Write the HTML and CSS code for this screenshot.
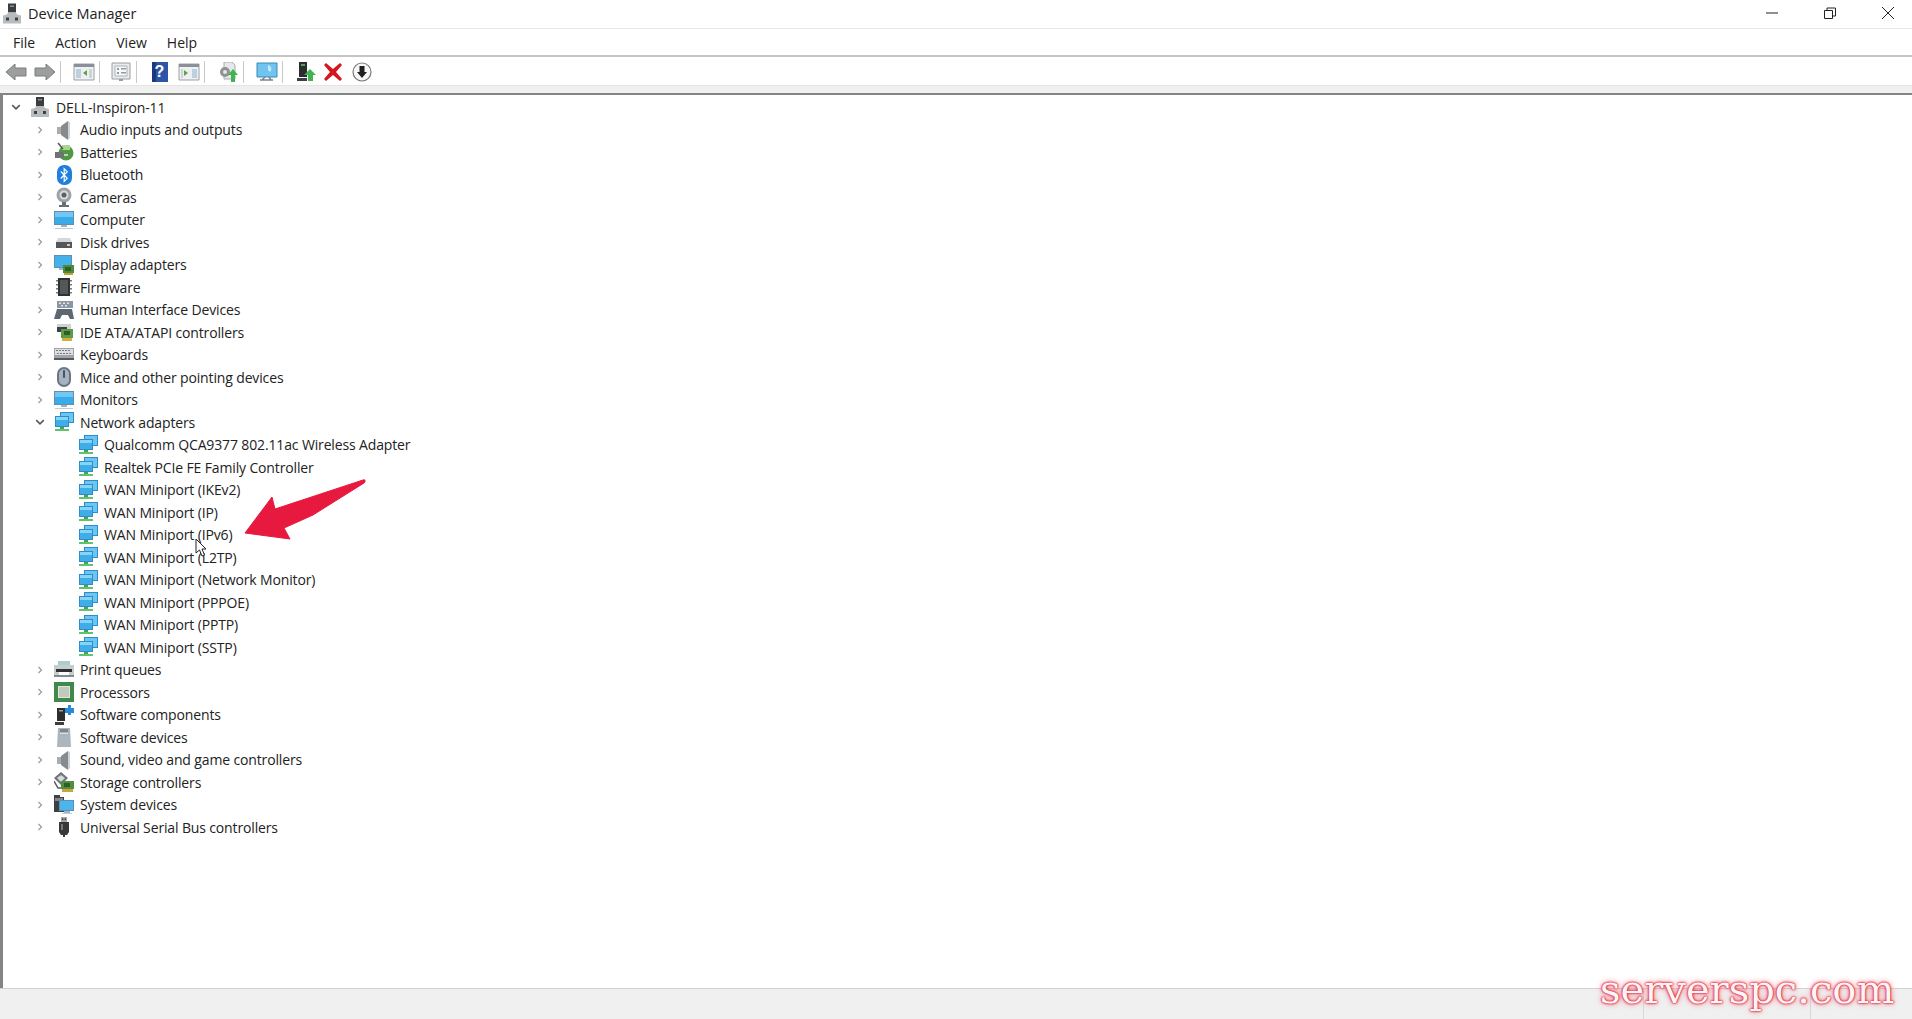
FILE: index.html
```html
<!DOCTYPE html>
<html lang="en">
<head>
  <meta charset="UTF-8">
  <title>Device Manager</title>
  <link rel="stylesheet" href="styles.css">
</head>
<body>
  <svg class="sprite" xmlns="http://www.w3.org/2000/svg">
    <symbol id="chev-r" viewBox="0 0 8 10"><path d="M2.5 2l3 3-3 3" fill="none" stroke="#9a9a9a" stroke-width="1.2"/></symbol>
    <symbol id="chev-d" viewBox="0 0 10 8"><path d="M2 2.5l3 3 3-3" fill="none" stroke="#555" stroke-width="1.2"/></symbol>

    <symbol id="i-host" viewBox="0 0 20 20"><path d="M6 0h8v9H6z" fill="#3a3d40"/><path d="M8 2h4v1.500H8z" fill="#8b8f92"/><path d="M6 9h8l1 2 4 1v8H1v-8l4-1z" fill="#b9bcbf"/><path d="M4 14h3v3H4zM13 14h3v3h-3z" fill="#3f4245"/></symbol>
    <symbol id="i-audio" viewBox="0 0 20 20"><path d="M3 7h4v7H3z" fill="#a9adb0"/><path d="M7 6l7-5v19l-7-5z" fill="#878b8e"/><path d="M14 1l2 1v16l-2 2z" fill="#cfd2d4"/></symbol>
    <symbol id="i-battery" viewBox="0 0 20 20"><circle cx="12" cy="11" r="7.5" fill="#4e9a3c"/><path d="M8 3h8v5H8z" fill="#a7d596"/><path d="M1 10h7l2 1.5V15l-2 1H1z" fill="#6e7276"/><path d="M10 12h4v2h-4z" fill="#c7cacc"/><path d="M4 1l5 6" stroke="#555" stroke-width="1.5"/></symbol>
    <symbol id="i-bt" viewBox="0 0 20 20"><rect x="3" y="0" width="15" height="20" rx="7" fill="#1f7fdc"/><path d="M6.800 6.500l6.400 6.800-3 3V3.700l3 3-6.400 6.800" fill="none" stroke="#fff" stroke-width="1.200"/></symbol>
    <symbol id="i-camera" viewBox="0 0 20 20"><circle cx="10" cy="8" r="7.5" fill="#9ea2a5"/><circle cx="10" cy="8" r="4.5" fill="#d8dadb"/><circle cx="10" cy="8" r="2.5" fill="#5c6064"/><path d="M8 15h4v3h3v2H5v-2h3z" fill="#6a6e72"/></symbol>
    <symbol id="i-monitor" viewBox="0 0 20 20"><rect x="0" y="1" width="20" height="14" fill="#5f8fb3"/><rect x="1" y="2" width="18" height="12" fill="#38abe8"/><path d="M1 2h18v5H1z" fill="#72c7f2"/><path d="M7 15h6v2H7z" fill="#9db4c4"/><path d="M1 18h18v1H1z" fill="#c3ccd2"/></symbol>
    <symbol id="i-disk" viewBox="0 0 20 20"><path d="M4 6h12l2 4H2z" fill="#d5d7d9"/><path d="M2 10h16v6H2z" fill="#55585b"/><path d="M13 12h3v2h-3z" fill="#c9cccf"/></symbol>
    <symbol id="i-display" viewBox="0 0 20 20"><rect x="0" y="0" width="18" height="13" fill="#5f8fb3"/><rect x="1" y="1" width="16" height="11" fill="#45b1ea"/><path d="M5 13h7v2H5z" fill="#9db4c4"/><path d="M9 10h11v8H9z" fill="#4d8a3a"/><path d="M11 12h6v4h-6z" fill="#2f5f28"/><path d="M10 18h9v2h-9z" fill="#c6a13a"/></symbol>
    <symbol id="i-chip" viewBox="0 0 20 20"><path d="M4 1h12v18H4z" fill="#2f3133"/><path d="M6 3h8v14H6z" fill="#55585a"/><path d="M2 3h2v1.500H2zM2 7h2v1.500H2zM2 11h2v1.500H2zM2 15h2v1.500H2zM16 3h2v1.500h-2zM16 7h2v1.500h-2zM16 11h2v1.500h-2zM16 15h2v1.500h-2z" fill="#797c7f"/></symbol>
    <symbol id="i-hid" viewBox="0 0 20 20"><path d="M3 1h16v7H3z" fill="#8d96a3"/><path d="M5 2.500h2v1.500H5zM9 2.500h2v1.500H9zM13 2.500h2v1.500h-2zM7 5h2v1.500H7zM11 5h2v1.500h-2z" fill="#e1e4e8"/><path d="M3 9h15l2 10h-4l-2-4H8l-2 4H0z" fill="#5d6673"/></symbol>
    <symbol id="i-ide" viewBox="0 0 20 20"><path d="M3 2h14v5H3z" fill="#cfd1d3"/><path d="M3 5h10v5H3z" fill="#3f4245"/><path d="M7 7h12v9H7z" fill="#5c9a45"/><path d="M10 9h6v4h-6z" fill="#2f5f28"/><path d="M8 16h10v3H8z" fill="#d4ae3c"/></symbol>
    <symbol id="i-kbd" viewBox="0 0 20 20"><path d="M0 3h20v12H0z" fill="#9fa4a9"/><path d="M1 4h18v6H1z" fill="#dcdee0"/><path d="M2 5h2v1H2zM5 5h2v1H5zM8 5h2v1H8zM11 5h2v1h-2zM14 5h2v1h-2zM3 8h2v1H3zM6 8h2v1H6zM9 8h2v1H9zM12 8h2v1h-2zM15 8h2v1h-2z" fill="#777b80"/><path d="M0 13h20v2H0z" fill="#55595d"/></symbol>
    <symbol id="i-mouse" viewBox="0 0 20 20"><rect x="3" y="0" width="14" height="20" rx="7" fill="#6b7583"/><rect x="5" y="2" width="10" height="16" rx="5" fill="#a8b3c2"/><rect x="9" y="3" width="2" height="8" rx="1" fill="#4a525d"/></symbol>
    <symbol id="i-net" viewBox="0 0 20 20"><rect x="6" y="0" width="14" height="11" fill="#2f8ccc"/><rect x="7" y="1" width="12" height="9" fill="#6cc6f2"/><rect x="1" y="4" width="14" height="11" fill="#2f8ccc"/><rect x="2" y="5" width="12" height="9" fill="#3fadE8"/><path d="M2 5h12v3H2z" fill="#86d4f6"/><path d="M6 15h4v2H6z" fill="#3ea84a"/><path d="M1 17h14v2H1z" fill="#63c26c"/></symbol>
    <symbol id="i-print" viewBox="0 0 20 20"><path d="M4 1h12v5H4z" fill="#a9cfc9"/><path d="M0 5h20v10H0z" fill="#c9ccce"/><path d="M2 9h16v3H2z" fill="#2f3234"/><path d="M5 12h10v4H5z" fill="#fff"/><path d="M0 15h20v2H0z" fill="#85898c"/></symbol>
    <symbol id="i-cpu" viewBox="0 0 20 20"><path d="M0 0h20v20H0z" fill="#3f8a4a"/><path d="M4 4h12v12H4z" fill="#dfe5da"/><path d="M5 5h10v10H5z" fill="#c2c9bd"/></symbol>
    <symbol id="i-swcomp" viewBox="0 0 20 20"><path d="M3 3h8v13H3z" fill="#2b2d2f"/><path d="M5 5h4v1.500H5z" fill="#9a9ea1"/><path d="M1 17h9v3H1z" fill="#3c3f41"/><path d="M11 3h3V0h3v3h3v5h-3v2h-3V8h-3z" fill="#2b87d8"/></symbol>
    <symbol id="i-swdev" viewBox="0 0 20 20"><path d="M4 1h12l1 19H3z" fill="#aeb6bd"/><path d="M6 2h8v3H6z" fill="#7f878e"/><path d="M6 6h8v1H6z" fill="#d8dde0"/></symbol>
    <symbol id="i-storage" viewBox="0 0 20 20"><path d="M7 0l7 6-7 7-7-7z" fill="#70757a"/><path d="M7 3l4 3-4 4-4-4z" fill="#d6d9db"/><path d="M7 9h13v8H7z" fill="#4f8f3e"/><path d="M10 11h6v4h-6z" fill="#2f5f28"/><path d="M8 17h11v3H8z" fill="#cba63a"/><path d="M0 9l4 7h3" fill="none" stroke="#55595c" stroke-width="1.500"/></symbol>
    <symbol id="i-system" viewBox="0 0 20 20"><path d="M0 0h6v2h4v15H0z" fill="#3d4144"/><path d="M1 3h8v3H1z" fill="#84888b"/><rect x="5" y="5" width="15" height="11" fill="#5f8fb3"/><rect x="6" y="6" width="13" height="9" fill="#4bb5ee"/><path d="M10 16h6v2h-6z" fill="#9db4c4"/><path d="M8 18h10v1H8z" fill="#c3ccd2"/></symbol>
    <symbol id="i-usb" viewBox="0 0 20 20"><path d="M7 0h6v5H7z" fill="#a2a5a8"/><path d="M8 1.500h1.500v1.500H8zM10.500 1.500H12v1.500h-1.500z" fill="#444"/><path d="M5 5h10v10l-2 3h-6l-2-3z" fill="#37393b"/><path d="M9 18h2v2H9z" fill="#37393b"/><path d="M7 7h2v6H7z" fill="#77797c"/></symbol>

    <symbol id="t-back" viewBox="0 0 22 18"><path d="M1 9l9-8v4h11v8H10v4z" fill="#9c9f9e" stroke="#7a7d7c"/></symbol>
    <symbol id="t-fwd" viewBox="0 0 22 18"><path d="M21 9l-9-8v4H1v8h11v4z" fill="#9c9f9e" stroke="#7a7d7c"/></symbol>
    <symbol id="t-tree" viewBox="0 0 22 18"><path d="M1 1h20v16H1z" fill="#eef0f1" stroke="#9ca1a5"/><path d="M1 1h20v3H1z" fill="#8a9098"/><path d="M3 6h5v9H3z" fill="#bcd0e0"/><path d="M14 7l-4 3 4 3z" fill="#5aa54c"/><path d="M16 6h3v9h-3z" fill="#cfd4d8"/></symbol>
    <symbol id="t-props" viewBox="0 0 20 20"><path d="M1 1h18v16H1z" fill="#e9ebec" stroke="#9a9ea2"/><path d="M4 4h12v10H4z" fill="#f6f7f8" stroke="#aeb3b7"/><path d="M6 6h2v2H6zM6 10h2v2H6zM10 6h5v1.500h-5zM10 10h5v1.500h-5z" fill="#8d9ba8"/><path d="M8 17h4v2H8z" fill="#9a9ea2"/></symbol>
    <symbol id="t-help" viewBox="0 0 18 20"><path d="M1 0h16v20H1z" fill="#2c55a8"/><path d="M1 0h4v20H1z" fill="#1b3a7e"/></symbol>
    <symbol id="t-view" viewBox="0 0 22 18"><path d="M1 1h20v16H1z" fill="#eef0f1" stroke="#9ca1a5"/><path d="M1 1h20v3H1z" fill="#8a9098"/><path d="M14 6h5v9h-5z" fill="#bcd0e0"/><path d="M6 7l4 3-4 3z" fill="#5aa54c"/><path d="M3 6h2v9H3z" fill="#cfd4d8"/></symbol>
    <symbol id="t-update" viewBox="0 0 20 20"><path d="M6 0h8l3 3v14H6z" fill="#e6e7e8" stroke="#a8abad"/><circle cx="7" cy="10" r="5" fill="#8f9396"/><circle cx="7" cy="10" r="2" fill="#e6e7e8"/><path d="M15 7l5 6h-3v7h-4v-7h-3z" fill="#3fb451"/></symbol>
    <symbol id="t-scan" viewBox="0 0 22 20"><path d="M1 1h20v14H1z" fill="#6fc5f0" stroke="#3f87b5"/><path d="M12 3a4 4 0 0 1 2 7l-2-2z" fill="#c7e9fa"/><path d="M9 15l-3 3M13 15l2 3M4 18h13" stroke="#7d8488" stroke-width="1.500" fill="none"/></symbol>
    <symbol id="t-enable" viewBox="0 0 20 20"><path d="M3 0h8v15H3z" fill="#2b2d2f"/><path d="M5 2h4v2H5z" fill="#50a55a"/><path d="M1 16h10v3H1z" fill="#3c3f41"/><path d="M14 7l6 6h-3v6h-5v-6H8z" fill="#3fb451"/></symbol>
    <symbol id="t-remove" viewBox="0 0 20 20"><path d="M3 1l7 6 7-6 2 2-6 7 6 7-2 2-7-6-7 6-2-2 6-7-6-7z" fill="#d5161f"/></symbol>
    <symbol id="t-down" viewBox="0 0 20 20"><circle cx="10" cy="10" r="9" fill="#f7f7f7" stroke="#77797b" stroke-width="1.200"/><path d="M7.500 4h5v6h2.500l-5 6-5-6h2.500z" fill="#1f1f1f"/></symbol>
  </svg>

  <div class="window">
    <header class="titlebar">
      <svg class="title-icon"><use href="#i-host"/></svg>
      <span class="title-text">Device Manager</span>
      <div class="win-btns">
        <button class="win-btn"><svg viewBox="0 0 14 14"><path d="M1 7h12" stroke="#222" fill="none"/></svg></button>
        <button class="win-btn"><svg viewBox="0 0 14 14"><path d="M1.500 4.500h8v8h-8zM4 4.500V2h8.500v8h-3" stroke="#222" fill="none"/></svg></button>
        <button class="win-btn"><svg viewBox="0 0 14 14"><path d="M1 1l12 12M13 1L1 13" stroke="#222" fill="none"/></svg></button>
      </div>
    </header>

    <nav class="menubar">
      <span>File</span>
      <span>Action</span>
      <span>View</span>
      <span>Help</span>
    </nav>

    <div class="toolbar">
      <button class="tb-btn"><svg><use href="#t-back"/></svg></button>
      <button class="tb-btn"><svg><use href="#t-fwd"/></svg></button>
      <i class="tb-sep"></i>
      <button class="tb-btn"><svg><use href="#t-tree"/></svg></button>
      <i class="tb-sep"></i>
      <button class="tb-btn tb-pull"><svg><use href="#t-props"/></svg></button>
      <i class="tb-sep"></i>
      <button class="tb-btn help-btn"><svg><use href="#t-help"/></svg><span class="help-mark">?</span></button>
      <button class="tb-btn"><svg><use href="#t-view"/></svg></button>
      <i class="tb-sep"></i>
      <button class="tb-btn"><svg><use href="#t-update"/></svg></button>
      <i class="tb-sep"></i>
      <button class="tb-btn"><svg><use href="#t-scan"/></svg></button>
      <i class="tb-sep"></i>
      <button class="tb-btn"><svg><use href="#t-enable"/></svg></button>
      <button class="tb-btn tb-pull"><svg><use href="#t-remove"/></svg></button>
      <button class="tb-btn"><svg><use href="#t-down"/></svg></button>
    </div>
    <div class="toolbar-gap"></div>

    <main class="tree">
      <div class="row"><svg class="chev"><use href="#chev-d"/></svg><svg class="ico"><use href="#i-host"/></svg><span>DELL-Inspiron-11</span></div>
      <div class="branch">
        <div class="row"><svg class="chev"><use href="#chev-r"/></svg><svg class="ico"><use href="#i-audio"/></svg><span>Audio inputs and outputs</span></div>
        <div class="row"><svg class="chev"><use href="#chev-r"/></svg><svg class="ico"><use href="#i-battery"/></svg><span>Batteries</span></div>
        <div class="row"><svg class="chev"><use href="#chev-r"/></svg><svg class="ico"><use href="#i-bt"/></svg><span>Bluetooth</span></div>
        <div class="row"><svg class="chev"><use href="#chev-r"/></svg><svg class="ico"><use href="#i-camera"/></svg><span>Cameras</span></div>
        <div class="row"><svg class="chev"><use href="#chev-r"/></svg><svg class="ico"><use href="#i-monitor"/></svg><span>Computer</span></div>
        <div class="row"><svg class="chev"><use href="#chev-r"/></svg><svg class="ico"><use href="#i-disk"/></svg><span>Disk drives</span></div>
        <div class="row"><svg class="chev"><use href="#chev-r"/></svg><svg class="ico"><use href="#i-display"/></svg><span>Display adapters</span></div>
        <div class="row"><svg class="chev"><use href="#chev-r"/></svg><svg class="ico"><use href="#i-chip"/></svg><span>Firmware</span></div>
        <div class="row"><svg class="chev"><use href="#chev-r"/></svg><svg class="ico"><use href="#i-hid"/></svg><span>Human Interface Devices</span></div>
        <div class="row"><svg class="chev"><use href="#chev-r"/></svg><svg class="ico"><use href="#i-ide"/></svg><span>IDE ATA/ATAPI controllers</span></div>
        <div class="row"><svg class="chev"><use href="#chev-r"/></svg><svg class="ico"><use href="#i-kbd"/></svg><span>Keyboards</span></div>
        <div class="row"><svg class="chev"><use href="#chev-r"/></svg><svg class="ico"><use href="#i-mouse"/></svg><span>Mice and other pointing devices</span></div>
        <div class="row"><svg class="chev"><use href="#chev-r"/></svg><svg class="ico"><use href="#i-monitor"/></svg><span>Monitors</span></div>
        <div class="row"><svg class="chev"><use href="#chev-d"/></svg><svg class="ico"><use href="#i-net"/></svg><span>Network adapters</span></div>
        <div class="branch">
          <div class="row"><i class="chev"></i><svg class="ico"><use href="#i-net"/></svg><span>Qualcomm QCA9377 802.11ac Wireless Adapter</span></div>
          <div class="row"><i class="chev"></i><svg class="ico"><use href="#i-net"/></svg><span>Realtek PCIe FE Family Controller</span></div>
          <div class="row"><i class="chev"></i><svg class="ico"><use href="#i-net"/></svg><span>WAN Miniport (IKEv2)</span></div>
          <div class="row"><i class="chev"></i><svg class="ico"><use href="#i-net"/></svg><span>WAN Miniport (IP)</span></div>
          <div class="row"><i class="chev"></i><svg class="ico"><use href="#i-net"/></svg><span>WAN Miniport (IPv6)</span></div>
          <div class="row"><i class="chev"></i><svg class="ico"><use href="#i-net"/></svg><span>WAN Miniport (L2TP)</span></div>
          <div class="row"><i class="chev"></i><svg class="ico"><use href="#i-net"/></svg><span>WAN Miniport (Network Monitor)</span></div>
          <div class="row"><i class="chev"></i><svg class="ico"><use href="#i-net"/></svg><span>WAN Miniport (PPPOE)</span></div>
          <div class="row"><i class="chev"></i><svg class="ico"><use href="#i-net"/></svg><span>WAN Miniport (PPTP)</span></div>
          <div class="row"><i class="chev"></i><svg class="ico"><use href="#i-net"/></svg><span>WAN Miniport (SSTP)</span></div>
        </div>
        <div class="row"><svg class="chev"><use href="#chev-r"/></svg><svg class="ico"><use href="#i-print"/></svg><span>Print queues</span></div>
        <div class="row"><svg class="chev"><use href="#chev-r"/></svg><svg class="ico"><use href="#i-cpu"/></svg><span>Processors</span></div>
        <div class="row"><svg class="chev"><use href="#chev-r"/></svg><svg class="ico"><use href="#i-swcomp"/></svg><span>Software components</span></div>
        <div class="row"><svg class="chev"><use href="#chev-r"/></svg><svg class="ico"><use href="#i-swdev"/></svg><span>Software devices</span></div>
        <div class="row"><svg class="chev"><use href="#chev-r"/></svg><svg class="ico"><use href="#i-audio"/></svg><span>Sound, video and game controllers</span></div>
        <div class="row"><svg class="chev"><use href="#chev-r"/></svg><svg class="ico"><use href="#i-storage"/></svg><span>Storage controllers</span></div>
        <div class="row"><svg class="chev"><use href="#chev-r"/></svg><svg class="ico"><use href="#i-system"/></svg><span>System devices</span></div>
        <div class="row"><svg class="chev"><use href="#chev-r"/></svg><svg class="ico"><use href="#i-usb"/></svg><span>Universal Serial Bus controllers</span></div>
      </div>
    </main>

    <footer class="statusbar">
      <div class="status-main"></div>
      <div class="status-mid"></div>
      <div class="status-end"></div>
    </footer>
  </div>

  <!-- annotation on top of the screenshot -->
  <svg class="arrow" viewBox="0 0 124 64"><path d="M1 55L28 19l3 12L119 2c2-1 3 1 1 3L69 37 40 50l6 11z" fill="#e8193f" stroke="#e8193f" stroke-linejoin="round"/></svg>
  <svg class="cursor" viewBox="0 0 12 19"><path d="M1 1v14l3.500-3 2.500 6 2.500-1-2.500-6H11z" fill="#fff" stroke="#222"/></svg>
  <div class="watermark">serverspc.com</div>
</body>
</html>
```
FILE: styles.css
```css
* { box-sizing: border-box; margin: 0; padding: 0; }
body { font-family: 'Open Sans', 'Noto Sans', sans-serif; font-size: 14px; letter-spacing: -0.14px; color: #222; background: #fff; overflow: hidden; }
.sprite { display: none; }
button { border: none; background: none; display: flex; align-items: center; justify-content: center; }

.window { display: flex; flex-direction: column; height: 1019px; }

/* Barra de titulo */
.titlebar { height: 29px; display: flex; align-items: center; padding: 0 0 2px 2px; border-bottom: 1px solid #e6e6e6; }
.title-icon { width: 20px; height: 21px; margin-right: 6px; }
.title-text { font-size: 14.5px; letter-spacing: 0; }
.win-btns { margin-left: auto; display: flex; gap: 12px; padding-right: 1px; }
.win-btn { width: 46px; height: 26px; }
.win-btn svg { width: 14px; height: 14px; }

/* Menu */
.menubar { height: 28px; display: flex; align-items: center; gap: 20px; padding-left: 13px; border-bottom: 2px solid #c4c4c4; font-size: 14px; letter-spacing: 0; }

/* Toolbar */
.toolbar { height: 29px; display: flex; align-items: center; padding: 1px 0 0 1px; border-bottom: 1px solid #e4e4e4; }
.tb-btn { width: 29px; height: 24px; position: relative; }
.tb-btn svg { width: 22px; height: 20px; }
.tb-sep { width: 1px; height: 22px; background: #c8c8c8; margin: 0 8px 0 1px; }
.tb-pull { margin-left: -2px; }
.help-mark { position: absolute; color: #fff; font-weight: 700; font-size: 16px; }
.toolbar-gap { height: 7px; background: #f0f0f0; }

/* Arvore */
.tree { flex: 1; border-top: 2px solid #858585; border-left: 3px solid #858585; padding: 1px 0 0 1px; }
.row { height: 22.5px; display: flex; align-items: center; white-space: nowrap; }
.chev { width: 24px; height: 10px; flex: none; }
.ico { width: 20px; height: 20px; margin: 0 2px; flex: none; }
.row span { margin-left: 4px; }
.branch { padding-left: 24px; }

/* Status */
.statusbar { height: 31px; display: flex; background: #f0f0f0; border-top: 1px solid #d2d2d2; }
.status-main { width: 1644px; border-right: 1px solid #d9d9d9; }
.status-mid { width: 167px; border-right: 1px solid #d9d9d9; }
.status-end { flex: 1; }

/* Anotacoes */
.arrow { position: absolute; left: 244px; top: 478px; width: 124px; height: 64px; }
.cursor { position: absolute; left: 195px; top: 538px; width: 12px; height: 19px; }
.watermark { position: absolute; left: 1600px; top: 966px; font-family: 'DejaVu Serif', serif; font-size: 40px; letter-spacing: 0; color: #fff6f4; text-shadow: 0 0 1px #d81a3a, 0 0 2px #e02040, 0 0 3px #e8304a, 0 0 6px #f0606f; }
```
